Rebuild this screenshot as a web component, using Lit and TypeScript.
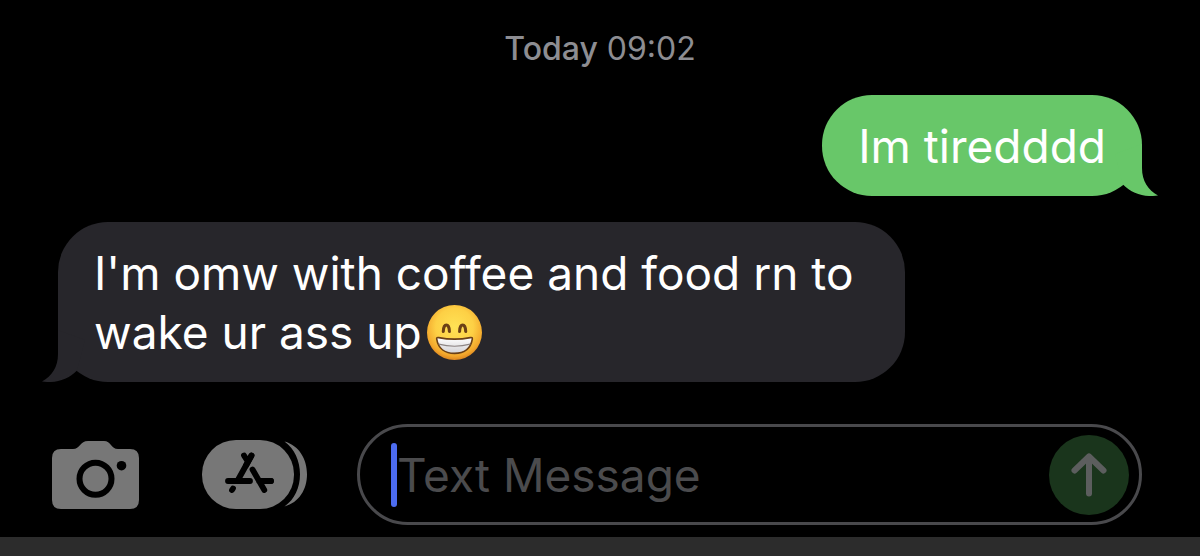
import { LitElement, html, css } from "lit";
import { customElement, property } from "lit/decorators.js";
import { classMap } from "lit/directives/class-map.js";

const grin = html`<svg class="emoji" viewBox="0 0 54 54" role="img" aria-label="Beaming face with smiling eyes">
  <defs>
    <radialGradient id="face" cx="50%" cy="40%" r="62%">
      <stop offset="0" stop-color="#ffe255" />
      <stop offset="0.55" stop-color="#fdd045" />
      <stop offset="0.85" stop-color="#f3a72c" />
      <stop offset="1" stop-color="#d67c1c" />
    </radialGradient>
    <linearGradient id="teeth" x1="0" y1="0" x2="0" y2="1">
      <stop offset="0" stop-color="#ffffff" />
      <stop offset="1" stop-color="#d3d2d6" />
    </linearGradient>
  </defs>
  <circle cx="27" cy="27" r="27" fill="url(#face)" />
  <path d="M16 26C16.2 17.500 21.800 17.500 22 26M32 26C32.200 17.500 37.800 17.500 38 26" fill="none" stroke="#6b4016" stroke-width="3" stroke-linecap="round" />
  <path d="M9.500 33.200Q9.400 31.600 11.500 32Q27 35 42.500 32Q44.800 31.600 44.500 33.500C42.800 43.200 36 47.500 27 47.500S11 43 9.500 33.200Z" fill="url(#teeth)" stroke="#6b4016" stroke-width="1.600" />
  <path d="M11.500 38.500Q27 42.500 42.500 38.500" fill="none" stroke="#8d8584" stroke-width="1.200" />
</svg>`;

@customElement("message-bubble")
class MessageBubble extends LitElement {
  @property({ type: Boolean }) sent = false;

  static styles = css`
    :host {
      display: flex;
    }
    .bubble {
      position: relative;
      box-sizing: border-box;
      max-width: 847px;
      padding: 22px 36px 20px;
      border-radius: 50px;
      background: #27262b;
      color: #fff;
    }
    .sent {
      margin-left: auto;
      background: #68c769;
    }
    .tail {
      position: absolute;
      bottom: 0;
      left: -16px;
      width: 43px;
      height: 52px;
      transform: scaleX(-1);
      fill: #27262b;
    }
    .sent .tail {
      left: auto;
      right: -16px;
      transform: none;
      fill: #68c769;
    }
  `;

  render() {
    return html`<div class=${classMap({ bubble: true, sent: this.sent })}>
      <svg class="tail" viewBox="0 0 43 52" aria-hidden="true">
        <path d="M0 10L27 0V24C27 37 33 46 43 51.500C30 53.500 17 50 8 40.500Z" />
      </svg>
      <slot></slot>
    </div>`;
  }
}

@customElement("app-root")
class AppRoot extends LitElement {
  static styles = css`
    :host {
      display: flex;
      flex-direction: column;
      min-height: 100vh;
      background: #000;
      font-family: Inter, "Liberation Sans", sans-serif;
      font-size: 46px;
      line-height: 59px;
    }
    .thread {
      display: flex;
      flex-direction: column;
      gap: 26px;
      padding: 29px 58px 42px;
    }
    .stamp {
      font-size: 32px;
      line-height: 40px;
      text-align: center;
      color: #8d8d92;
    }
    .day {
      font-weight: 500;
    }
    .emoji {
      width: 55px;
      height: 55px;
      margin-left: 5px;
      vertical-align: -11px;
    }
    .composer {
      display: flex;
      align-items: center;
      padding: 0 58px 12px 52px;
    }
    .tool {
      flex: none;
      display: flex;
      padding: 0;
      border: 0;
      background: none;
      color: #777;
    }
    .camera {
      width: 87px;
      height: 68px;
      margin-right: 63px;
    }
    .apps {
      width: 105px;
      height: 69px;
      margin-right: 50px;
    }
    .field {
      flex: 1;
      min-width: 0;
      display: flex;
      align-items: center;
      box-sizing: border-box;
      height: 101px;
      padding: 0 10px 0 31px;
      border: 3px solid #49494c;
      border-radius: 51px;
    }
    .caret {
      flex: none;
      width: 6px;
      height: 64px;
      border-radius: 3px;
      background: #4c6cf0;
    }
    .text {
      flex: 1;
      min-width: 0;
      height: 64px;
      padding: 0;
      border: 0;
      outline: 0;
      background: none;
      color: #fff;
      font: inherit;
      caret-color: #4c6cf0;
    }
    .text::placeholder {
      color: #4b4b4d;
      opacity: 1;
    }
    .send {
      flex: none;
      width: 80px;
      height: 80px;
      padding: 0;
      border: 0;
      border-radius: 50%;
      background: #1a351c;
    }
    .arrow {
      display: block;
      width: 80px;
      height: 80px;
    }
    .edge {
      flex: 1;
      background: #2c2c2c;
    }
  `;

  render() {
    return html`
      <main class="thread">
        <div class="stamp"><span class="day">Today</span> 09:02</div>
        <message-bubble sent>Im tiredddd</message-bubble>
        <message-bubble>I'm omw with coffee and food rn to wake ur ass up${grin}</message-bubble>
      </main>
      <form class="composer" @submit=${(e: Event) => e.preventDefault()}>
        <button class="tool camera" type="button" aria-label="Camera">
          <svg width="87" height="68" viewBox="0 0 87 68">
            <path fill="currentColor" d="M9 8H21C28 8 28 0 36 0H52C59 0 59 8 66 8H78Q87 8 87 17V59Q87 68 78 68H9Q0 68 0 59V17Q0 8 9 8Z" />
            <circle cx="43.500" cy="37.700" r="16" fill="none" stroke="#000" stroke-width="6" />
            <circle cx="69.500" cy="24.700" r="4.800" fill="#000" />
          </svg>
        </button>
        <button class="tool apps" type="button" aria-label="Apps">
          <svg width="105" height="69" viewBox="0 0 105 69">
            <rect width="92" height="69" rx="34" fill="currentColor" />
            <path fill="currentColor" d="M82.500 1.500C97 5.500 105 19 105 34.300S97 62.500 82.500 66.500C92.500 59.500 98 48 98 34.300S92.500 9 82.500 1.500Z" />
            <g fill="none" stroke="#000" stroke-width="5.800" stroke-linecap="round" stroke-linejoin="round">
              <path d="M26 41H48M57 41H69" />
              <path d="M49.500 15.500L36.500 39M42 15.500L45.500 21M31 48.500L30 50" />
              <path d="M49.500 27L63 51.500" stroke="#777" stroke-width="9" stroke-linecap="butt" />
              <path d="M57 41H69M50.500 29.500L62.300 50" />
              <path d="M49.500 15.500L44 25.500" />
            </g>
          </svg>
        </button>
        <div class="field">
          <span class="caret"></span>
          <input class="text" type="text" placeholder="Text Message" aria-label="Text Message" />
          <button class="send" type="submit" aria-label="Send">
            <svg class="arrow" viewBox="0 0 80 80">
              <path d="M40 58.500V22M25.500 35.500L40 21.500L54.500 35.500" fill="none" stroke="#5c5e5e" stroke-width="6" stroke-linecap="round" stroke-linejoin="round" />
            </svg>
          </button>
        </div>
      </form>
      <div class="edge"></div>
    `;
  }
}
